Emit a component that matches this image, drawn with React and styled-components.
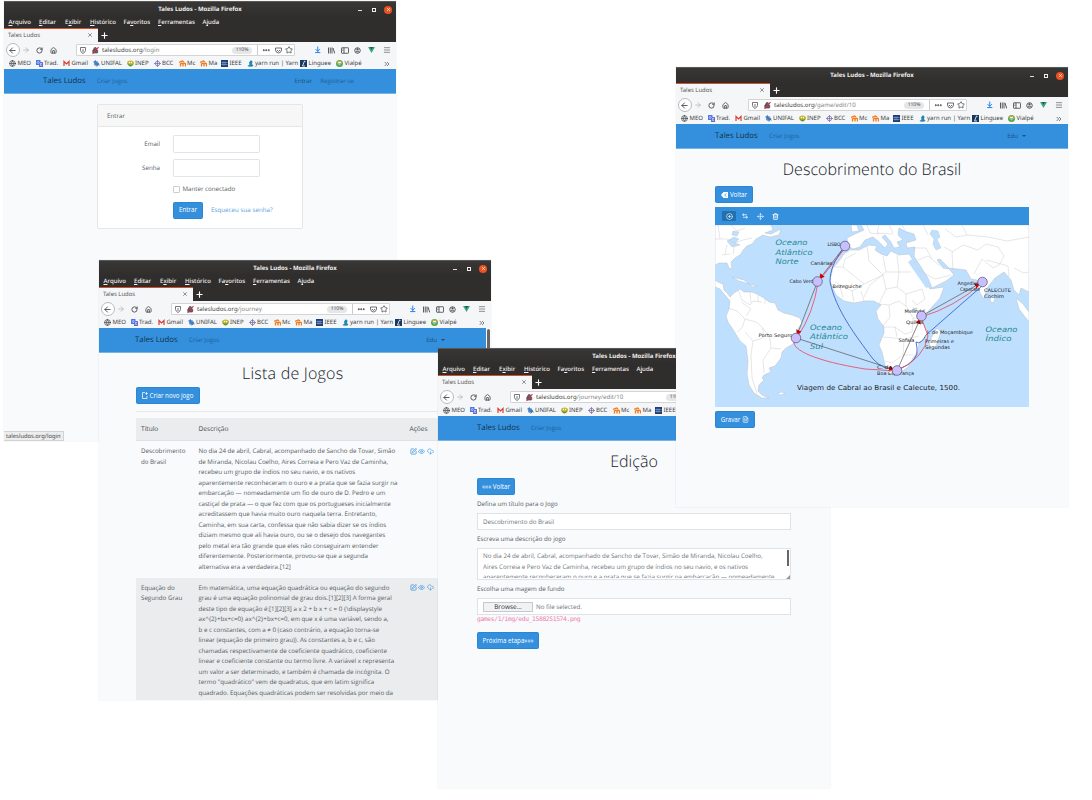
import React from 'react';
import styled, { createGlobalStyle } from 'styled-components';
import {
  ArrowLeft, ArrowRight, RotateCw, House, Ellipsis, Star, ArrowDownToLine, Menu, X, Plus,
  Globe, ChevronsRight, SquarePen, Eye, CloudDownload, Trash2,
  CirclePlus, Move, Lock, FileText,
} from 'lucide-react';

const Global = createGlobalStyle`
  *, *::before, *::after { box-sizing: border-box; }
  body { margin: 0; background: #fff; text-rendering: geometricPrecision; }
`;
const UI = '"Noto Sans", "Open Sans", sans-serif';
const PAGE = '"Open Sans", Lato, sans-serif';

const Desktop = styled.main`
  position: relative; width: 1092px; height: 800px; overflow: hidden; background: #fff;
  font: 6.2px/10.5px ${PAGE}; color: #555c62;
`;
const Win = styled.section`
  position: absolute; left: ${p => p.$x}px; top: ${p => p.$y}px; width: 392px; height: 440px;
  display: flex; flex-direction: column; overflow: hidden; background: #f8fafc;
  box-shadow: 0 0 1px rgba(90, 100, 110, .25);
`;
const Chrome = styled.header`font-family: ${UI}; flex: none;`;
const TitleBar = styled.div`
  height: 16px; display: grid; grid-template-columns: 1fr auto 1fr; align-items: center;
  background: linear-gradient(#393636, #302d2d); color: #f0efed; font-size: 6px; font-weight: 700;
  border-top: 1px solid #5b5858; letter-spacing: .02px;
`;
const Controls = styled.div`display: flex; justify-content: flex-end; align-items: center; gap: 10px; padding-right: 4px;`;
const Minimise = styled.i`width: 4px; height: 1px; background: #ddd; margin-top: 1px;`;
const Maximise = styled.i`width: 4px; height: 4px; border: 1px solid #eee;`;
const Close = styled.i`
  width: 8px; height: 8px; border-radius: 50%; background: #e95420; color: #fff;
  display: flex; align-items: center; justify-content: center; margin-left: -2px;
`;
const MenuBar = styled.div`
  height: 11px; display: grid; grid-template-columns: 30.5px 26px 25px 33.5px 34.5px 44.5px 40px;
  padding-left: 4.5px; background: #302d2d; color: #f4f2f0; font-size: 6.05px; font-weight: 500; line-height: 11px; white-space: nowrap;
  u { text-underline-offset: 1px; text-decoration-thickness: .6px; }
`;
const Tabs = styled.div`height: 14px; display: flex; align-items: center; background: #302d2d; color: #fff;`;
const Tab = styled.div`
  width: 94px; height: 14px; display: flex; align-items: center; justify-content: space-between;
  padding: 0 5px 1px 4px; background: #f5f6f7; border-top: 1px solid #d5502a; color: #555; font-size: 5.9px;
  margin-right: 2px;
`;
const ToolBar = styled.div`height: 16px; display: flex; align-items: center; background: #f5f6f7; color: #4a4a4f;`;
const NavButtons = styled.div`
  width: 72px; display: grid; grid-template-columns: 15px 12px 15px 12px; align-items: center; justify-items: center; padding-left: 1px;
`;
const Back = styled.span`
  width: 14px; height: 14px; border: 1px solid #bbb; border-radius: 50%; background: #fff; display: flex; align-items: center; justify-content: center;
`;
const Address = styled.div`
  width: 219px; height: 12px; display: grid; grid-template-columns: 12px 13px 1fr 24px 6px 12px 12px 9px;
  align-items: center; justify-items: center; border: 1px solid #d4d4d6; border-radius: 1px; background: #fff;
  font-size: 6.1px; padding-right: 1px;
`;
const Url = styled.span`justify-self: start; color: #444; white-space: nowrap; span { color: #888; }`;
const ZoomPill = styled.span`width: 20px; height: 7px; border-radius: 4px; background: #e6e6e8; font-size: 5px; line-height: 7px; text-align: center;`;
const Divider = styled.i`width: 1px; height: 10px; background: #ccc;`;
const Extensions = styled.div`display: grid; grid-template-columns: 14px 13px 13px 13px 14px 18px; flex: 1; padding-left: 16px; align-items: center; justify-items: center;`;
const LockWrap = styled.span`
  display: flex; height: 7px; width: 7px; position: relative; align-items: center; justify-content: center;
  &::after { content: ''; position: absolute; width: 9px; height: 1px; background: #e22850; transform: rotate(-48deg); }
`;
const Bookmarks = styled.div`height: 11px; display: flex; align-items: center; padding: 0 0 0 5px; background: #f5f6f7; color: #3c3c40; font-size: 6px; line-height: 9px;`;
const Bookmark = styled.span`width: ${p => p.$w}px; display: flex; align-items: center; gap: 1.5px; white-space: nowrap; flex: none; svg { flex: none; }`;
const Nav = styled.nav`
  height: 25px; flex: none; display: flex; align-items: center; background: #3490dc; padding: 0 ${p => p.$right}px 0 ${p => p.$left}px;
  color: #1d5f99; font-size: 6.1px; border-bottom: 1px solid #78b3e6; width: ${p => p.$w || 392}px;
`;
const Brand = styled.b`font-weight: 400; font-size: 7.8px; color: #12304b; width: 54px; white-space: nowrap;`;
const NavEnd = styled.span`margin-left: auto; display: flex; gap: 8px; align-items: center;`;
const Dark = styled.span`color: #15507f;`;
const Caret = styled.i`border: 2px solid transparent; border-top-color: #15507f; border-bottom: 0; margin-left: -4px;`;
const Body = styled.div`flex: 1; min-height: 0; padding: 0 39px; display: flex; flex-direction: column; align-items: flex-start; ${p => p.$pl && `padding-left: ${p.$pl}px; padding-right: 41px;`}`;
const Heading = styled.h1`
  align-self: stretch; flex: none; margin: 0; text-align: center; height: ${p => p.$h || 37}px; padding-top: 9px;
  font: 300 16px/22px ${PAGE}; color: #14181c; white-space: nowrap; letter-spacing: ${p => p.$ls || 0.04}px;
`;
const Button = styled.button`
  height: 17px; width: ${p => p.$w}px; padding: 0; border: 1px solid #2a86d3; border-radius: 1.5px; background: #3490dc; color: #fff;
  font: 6.2px/10px ${PAGE}; display: flex; align-items: center; justify-content: center; gap: 2px; white-space: nowrap; flex: none;
`;

const Card = styled.div`
  width: 206px; height: 125px; margin: 10px 0 0 54px; border: 1px solid #e4e6e8; border-radius: 2px; background: #fff;
`;
const CardHead = styled.div`height: 22px; padding: 0 9px; line-height: 21px; background: #f7f7f7; border-bottom: 1px solid #e4e6e8;`;
const Field = styled.label`display: grid; grid-template-columns: 62px 87px; column-gap: 13px; align-items: center; text-align: right; margin-top: ${p => p.$mt}px;`;
const Input = styled.span`height: 18px; border: 1px solid #e1e4e8; border-radius: 1.5px; background: #fff;`;
const Indent = styled.div`margin: ${p => p.$mt}px 0 0 75px; display: flex; align-items: center; gap: ${p => p.$gap}px; white-space: nowrap;`;
const Check = styled.i`width: 7px; height: 7px; border: 1px solid #ccc; border-radius: 1px; background: #fff;`;
const Link = styled.a`color: #5ba2de; letter-spacing: .03px;`;
const Status = styled.div`
  position: absolute; left: 0; bottom: 0; width: 60px; height: 10px; padding-left: 2px; background: #ecedee; border: 1px solid #d2d2d2; border-left: 0;
  font: 5.8px/8px ${UI}; color: #444; white-space: nowrap;
`;

const Rule = styled.hr`width: 303px; height: 1px; border: 0; margin: 7px 0 6px; background: #e5e8ea; flex: none;`;
const Row = styled.div`
  display: grid; grid-template-columns: 57.5px 211px 30px; width: 345px; flex: none; padding: 5px 0 5.5px 5.5px; white-space: nowrap;
  background: ${p => (p.$shade ? '#eaecee' : 'transparent')};
`;
const HeadRow = styled(Row)`height: 23px; padding-top: 6px; background: #eaecee; border-bottom: 1px solid #dee2e6; color: #454b50; font-size: 6.6px;`;
const Actions = styled.span`display: flex; gap: 1.5px; color: #3490dc; height: 10px; align-items: center;`;
const Line = styled.span`display: block; height: 10.5px;`;
const ScrollThumb = styled.i`position: absolute; right: 1px; top: 69px; width: 3px; height: 80px; border-radius: 2px; background: #666;`;

const Label = styled.label`height: 18px; line-height: 17px; flex: none;`;
const Control = styled.div`width: 314px; height: ${p => p.$h || 17}px; border: 1px solid #dfe3e6; background: #fff; padding: 0 5px; color: #6c757d; line-height: 15px; flex: none; display: flex; align-items: center; gap: 3px;`;
const TextArea = styled(Control)`
  display: block; position: relative; padding-top: 2px; line-height: 10.5px; white-space: nowrap;
  &::before { content: ''; position: absolute; right: 1px; top: 1px; width: 2px; height: 16px; background: #666; }
  &::after { content: ''; position: absolute; right: 0; bottom: 0; border: 2px solid transparent; border-right-color: #999; border-bottom-color: #999; }
`;
const Clip = styled.div`height: 27px; overflow: hidden;`;
const Browse = styled.span`width: 50px; height: 10px; border: 1px solid #c5c9cc; background: #f1f2f3; color: #333; text-align: center; line-height: 8px; font-size: 6.5px;`;
const Path = styled.code`font: 6.3px/10px "DejaVu Sans Mono", monospace; color: #f080ab; letter-spacing: -.35px; margin-bottom: 7px; white-space: nowrap;`;

const EditorBar = styled.div`
  width: 314px; height: 18px; margin-top: 4px; background: #3490dc; display: flex; align-items: center; padding-left: 7px; color: #fff; flex: none;
`;
const Tool = styled.span`width: 14px; height: 10px; margin-right: 1.5px; border-radius: 1px; display: flex; align-items: center; justify-content: center; background: ${p => (p.$on ? '#2270b0' : 'transparent')};`;
const MapSvg = styled.svg`display: block; flex: none; margin-bottom: 4px;`;

const menus = [['', 'A', 'rquivo'], ['', 'E', 'ditar'], ['E', 'x', 'ibir'], ['', 'H', 'istórico'], ['Fa', 'v', 'oritos'], ['', 'F', 'erramentas'], ['A', 'j', 'uda']];

const Mini = ({ children }) => <svg width="7" height="7" viewBox="0 0 14 14">{children}</svg>;
const Moodle = () => <Mini><path d="M0 5 7 2 10 4M3 13V7M3 8q3-3 5 0v5M8 8q3-3 5 0v5" fill="none" stroke="#f07a1c" strokeWidth="2.6" /></Mini>;
const marks = [
  ['MEO', 26.5, <Globe size={7} strokeWidth={2.2} />],
  ['Trad.', 27.5, <Mini><rect width="9" height="10" rx="1" fill="#4b74e8" /><rect x="6" y="4" width="8" height="10" rx="1" fill="#5b6bd1" /><circle cx="4.5" cy="5" r="2" fill="none" stroke="#fff" /><path d="M8 7h4M10 7q0 3-2 5M9 9l3 3" stroke="#fff" fill="none" /></Mini>],
  ['Gmail', 29.5, <Mini><path d="M2 12V3l5 5 5-5v9" fill="none" stroke="#dd3b32" strokeWidth="2.4" /></Mini>],
  ['UNIFAL', 34, <Mini><path d="M1 4l4-3 3 4 4 3-3 4-4-3-3-1 3-2zM8 2l5 9M2 9l6 4" fill="#3f7ec9" stroke="#2564b4" /></Mini>],
  ['INEP', 27, <Mini><ellipse cx="7" cy="6" rx="7" ry="5" fill="#c8b52f" /><path d="M1 7q6 5 12 0-2 6-6 6T1 7" fill="#4a9a48" /><circle cx="5" cy="5" r="1.4" fill="#fff" /><circle cx="9" cy="5" r="1.4" fill="#fff" /></Mini>],
  ['BCC', 25, <Mini><path d="M7 0v14M0 7h14" stroke="#7e6aa8" strokeWidth="1.5" /><circle cx="7" cy="7" r="4.5" fill="none" stroke="#7e6aa8" strokeWidth="1.5" /></Mini>],
  ['Mc', 21.5, <Moodle />],
  ['Ma', 21, <Moodle />],
  ['IEEE', 25.5, <Mini><rect width="14" height="14" fill="#1d3d79" /><path d="M1 5h12M1 9h12M4 3v8M8 3v8" stroke="#a9bde2" /></Mini>],
  ['yarn run | Yarn', 53.5, <Mini><path d="M7 1q4-1 4 3l-1 4 3 4q-4 2-10 1l-2-1 4-3-1-4z" fill="#2188b6" /></Mini>],
  ['Linguee', 36, <Mini><rect width="14" height="14" fill="#173a63" /><path d="M9 2 5 12h5M9 2l2 1" stroke="#fff" strokeWidth="1.6" fill="none" /></Mini>],
  ['Vialpé', 47, <Mini><circle cx="7" cy="7" r="7" fill="#58a744" /><circle cx="7" cy="7" r="3.5" fill="#fff" /><path d="M1 5q6-6 12 0" stroke="#e6b52a" strokeWidth="2" fill="none" /><path d="M4 8h6" stroke="#2f73b8" strokeWidth="2" /></Mini>],
];

function Browser({ x, y, url, menu = true, children }) {
  return (
    <Win $x={x} $y={y}>
      <Chrome>
        <TitleBar>
          <span /><span>Tales Ludos - Mozilla Firefox</span>
          <Controls><Minimise /><Maximise /><Close><X size={5} strokeWidth={3} /></Close></Controls>
        </TitleBar>
        {menu && <MenuBar>{menus.map(([a, u, b]) => <span key={b}>{a}<u>{u}</u>{b}</span>)}</MenuBar>}
        <Tabs><Tab><span>Tales Ludos</span><X size={6} strokeWidth={2.5} /></Tab><Plus size={9} strokeWidth={3} /></Tabs>
        <ToolBar>
          <NavButtons>
            <Back><ArrowLeft size={9} strokeWidth={2.4} /></Back><ArrowRight size={8} color="#aaa" />
            <RotateCw size={7} strokeWidth={3} /><House size={7} strokeWidth={2.8} />
          </NavButtons>
          <Address>
            <svg width="6" height="7" viewBox="0 0 12 14" fill="none" stroke="#4a4a4f" strokeWidth="1.5"><path d="M1 1h10v6q-1 4-5 6Q2 11 1 7zM6 4v6" /></svg><LockWrap><Lock size={6.5} strokeWidth={3} fill="#666" /></LockWrap>
            <Url>talesludos.org<span>/{url}</span></Url><ZoomPill>110%</ZoomPill><Divider /><Ellipsis size={8.5} strokeWidth={3.4} />
            <svg width="7" height="7" viewBox="0 0 14 14" fill="none" stroke="#4a4a4f" strokeWidth="1.6"><path d="M1 2h12v4q-1 6-6 6T1 6zM4 6l3 3 3-3" /></svg>
            <Star size={8} strokeWidth={2.3} />
          </Address>
          <Extensions>
            <ArrowDownToLine size={7.5} color="#1a7cf0" strokeWidth={3} />
            <svg width="7" height="7" viewBox="0 0 14 14" stroke="#4a4a4f" strokeWidth="1.8"><path d="M1 1v12M4.5 1v12M8 1v12M10 2l3.5 11" /></svg>
            <svg width="8" height="7" viewBox="0 0 16 14" fill="none" stroke="#4a4a4f" strokeWidth="1.7"><rect x="1" y="1.5" width="14" height="11" rx="1" /><path d="M6 1.5v11M3 4h1.5M3 7h1.5" /></svg>
            <svg width="7" height="7" viewBox="0 0 14 14" fill="none" stroke="#4a4a4f" strokeWidth="1.9"><circle cx="7" cy="7" r="5.5" /><path d="M4 8q3 3 6 0" /><circle cx="7" cy="4.8" r="1.3" fill="#4a4a4f" /></svg>
            <svg width="7" height="6" viewBox="0 0 14 12"><path d="M0 0h14L7 12z" fill="#35a877" /><path d="M4 0h6L7 5.5z" fill="#34495e" /></svg>
            <Menu size={8} strokeWidth={1.8} />
          </Extensions>
        </ToolBar>
        <Bookmarks>
          {marks.map(([t, w, icon]) => <Bookmark key={t} $w={w}>{icon}{t}</Bookmark>)}
          <ChevronsRight size={8} />
        </Bookmarks>
      </Chrome>
      {children}
    </Win>
  );
}

const Top = ({ left = 39, right = 42, w, user }) => (
  <Nav $left={left} $right={right} $w={w}>
    <Brand>Tales Ludos</Brand><span>Criar Jogos</span>
    <NavEnd>{user ? <><Dark>Edu</Dark><Caret /></> : <><Dark>Entrar</Dark><span>Registrar-se</span></>}</NavEnd>
  </Nav>
);

const rows = [
  { title: ['Descobrimento', 'do Brasil'], text: [
    'No dia 24 de abril, Cabral, acompanhado de Sancho de Tovar, Simão', 'de Miranda, Nicolau Coelho, Aires Correia e Pero Vaz de Caminha,',
    'recebeu um grupo de índios no seu navio, e os nativos', 'aparentemente reconheceram o ouro e a prata que se fazia surgir na',
    'embarcação — nomeadamente um fio de ouro de D. Pedro e um', 'castiçal de prata — o que fez com que os portugueses inicialmente',
    'acreditassem que havia muito ouro naquela terra. Entretanto,', 'Caminha, em sua carta, confessa que não sabia dizer se os índios',
    'diziam mesmo que ali havia ouro, ou se o desejo dos navegantes', 'pelo metal era tão grande que eles não conseguiram entender',
    'diferentemente. Posteriormente, provou-se que a segunda', 'alternativa era a verdadeira.[12]'] },
  { title: ['Equação do', 'Segundo Grau'], text: [
    'Em matemática, uma equação quadrática ou equação do segundo', 'grau é uma equação polinomial de grau dois.[1][2][3] A forma geral',
    'deste tipo de equação é:[1][2][3] a x 2 + b x + c = 0 {\\displaystyle', 'ax^{2}+bx+c=0} ax^{2}+bx+c=0, em que x é uma variável, sendo a,',
    'b e c constantes, com a ≠ 0 (caso contrário, a equação torna-se', 'linear (equação de primeiro grau)). As constantes a, b e c, são',
    'chamadas respectivamente de coeficiente quadrático, coeficiente', 'linear e coeficiente constante ou termo livre. A variável x representa',
    'um valor a ser determinado, e também é chamada de incógnita. O', 'termo "quadrático" vem de quadratus, que em latim significa',
    'quadrado. Equações quadráticas podem ser resolvidas por meio da'] },
];

const lands = [
  'M0 0H56L58 5 50 8 56 9 66 4 64 10 55 12 48 10 41 14 37 19 32 21 28 25 26 29 20 33 16 37 17 44 14 43 12 38 4 38 0 40Z',
  'M0 55 3 57 8 59 9 65 13 69 15 72 19 68 25 64 29 67 37 67 42 69 49 73 54 77 60 78 63 85 69 88 77 90 85 93 87 98 82 105 81 113 78 119 71 123 67 127 66 133 60 141 54 143 56 147 49 150 47 153 49 155 44 160 43 166 47 170 54 173 47 173 39 168 34 160 32 149 33 136 31 121 25 116 19 106 13 97 11 91 14 84 15 76 10 70 5 64 0 62Z',
  'M135 25 144 25 154 20 162 21 160 25 166 29 172 31 176 26 184 30 194 29 198 35 203 45 208 55 215 64 229 62 225 73 217 82 209 91 208 98 213 108 211 112 204 118 203 126 198 133 193 142 185 148 174 149 170 140 167 127 164 120 169 108 169 102 163 94 161 86 166 80 159 76 150 76 139 78 129 76 121 70 117 61 115 55 118 43 124 36 129 29Z',
  'M146 0 149 5 140 9 132 13 133 21 138 24 145 22 150 15 158 12 163 16 170 23 173 19 167 12 170 10 176 17 179 23 185 22 182 17 188 15 183 10 184 3 192 7 199 9 201 15 191 18 192 23 200 22 199 31 206 42 213 53 217 63 231 56 239 50 234 44 228 43 222 35 225 34 234 43 251 45 256 54 262 55 265 68 269 74 272 63 280 53 289 47 296 55 299 65 304 70 306 63 314 67V0Z',
  'M136 0 142 0 144 6 137 7Z', 'M222 103 226 107 221 121 216 125 214 117Z', 'M276 71 280 74 278 78 275 76Z', 'M301 73 308 79 314 87 314 97 304 84Z', 'M17 52 29 55 34 59 24 56ZM34 59 42 61 38 62Z', 'M63 168 67 167 70 169 65 170Z',
];
const borders = 'M0 14 12 14 20 18 28 15 37 13M3 0 5 14M16 0 22 6 30 3M7 30 15 29M12 20 10 29M20 18 18 29M23 65 27 75 35 80 38 76 47 77M35 67 36 78M43 70 43 77M50 74 50 79M13 83 22 86 30 94 27 103 22 107M30 94 41 97 48 103 48 113 38 116 30 107M48 103 55 113 56 123 66 124M38 116 36 130 37 153 42 168M56 123 48 135 49 148M26 77 36 84 31 91M119 42 128 42 130 34 141 28M128 42 149 59 137 66 120 57M152 21 154 36 168 50 149 59M168 31 171 47 196 47M182 30 184 48 182 62 171 64 168 50M171 47 155 60 149 72M137 66 139 77M146 66 149 76M125 61 128 73M182 62 191 69 207 64M171 64 164 79 174 80 184 76 191 81 191 69M174 80 175 92 167 102 180 102 190 109 197 107 198 93 191 81M168 112 189 114 188 130 177 138 170 136M189 114 204 111M188 130 198 130M198 93 209 95M180 102 182 112M207 64 210 74 202 80 197 75M203 35 213 31 225 41M203 45 220 54 236 50M198 23 211 23 217 34M238 45 237 27 248 20 263 25 271 19 283 22 289 31 285 39 278 43 267 34 259 49M238 27 229 22M252 10 273 12 292 16 314 12M271 35 286 39 293 41 294 52M299 43 309 48 314 47M152 0 155 8 164 9M164 0 162 8 178 9M174 0 178 8M187 0 190 5M208 0 213 10M230 4 241 12 252 10M247 0 252 10';

const Txt = ({ x, y, w, children, big, sea }) => (
  <text x={x} y={y} textLength={w} lengthAdjust="spacingAndGlyphs" fontFamily="DejaVu Sans, sans-serif" fontSize={big ? 6.8 : sea ? 7.5 : 4.9}
    fontStyle={sea ? 'italic' : undefined} fill={sea ? '#268b91' : '#222'}>{children}</text>
);

function VoyageMap() {
  const nodes = [[130, 21], [102.5, 56.5], [81, 113], [182, 145.5], [206.5, 91], [267.5, 57]];
  return (
    <MapSvg width="314" height="182" viewBox="0 0 314 182">
      <defs><marker id="tip" viewBox="0 0 6 6" refX="9" refY="3" markerWidth="5.5" markerHeight="5.5" markerUnits="userSpaceOnUse" orient="auto"><path d="M0 0 6 3 0 6Z" fill="#d40000" /></marker></defs>
      <rect width="314" height="182" fill="#bfdfff" />
      <g fill="#fff" stroke="#b9bfc4" strokeWidth=".5">{lands.map(d => <path key={d} d={d} />)}</g>
      <g fill="#bfdfff" stroke="#b9bfc4" strokeWidth=".4">
        <path d="M217 5 223 6 225 12 222 14 226 23 221 25 218 19 219 14 215 9Z" /><path d="M12 16 19 12 24 14 20 18 25 20 17 22ZM18 6 24 7 22 11 17 10Z" />
        <path d="M193 37 197 34 214 62 211 63Z" stroke="none" /><path d="M207 86 210 84 210 90Z" /><path d="M198 83 202 83 201 87 198 87Z" />
      </g>
      <path d={borders} fill="none" stroke="#c9cdd0" strokeWidth=".5" />
      <Txt sea x="60.5" y="20" w="32">Oceano</Txt><Txt sea x="60.5" y="29.5" w="37">Atlântico</Txt><Txt sea x="60.5" y="39" w="23">Norte</Txt>
      <Txt sea x="95" y="105" w="32">Oceano</Txt><Txt sea x="95" y="114" w="38">Atlântico</Txt><Txt sea x="95" y="123.5" w="13">Sul</Txt>
      <Txt sea x="270.5" y="106.5" w="32">Oceano</Txt><Txt sea x="270.5" y="116" w="26">Índico</Txt>
      <g fill="none" stroke="#2857c5" strokeWidth=".8">
        <path d="M130 21C119 36 115 45 115 57 121 85 140 110 158 134Q168 145 182 145Q205 136 202 123L201 117Q206 120 211 110L267 61" />
      </g>
      <g fill="none" stroke="#ef4056" strokeWidth=".8">
        <path d="M131 22 103 57Q99 87 82 113M79 116C77 125 100 136 150 144L182 146Q210 132 213 111L206 92Q240 82 267 58" />
      </g>
      <g stroke="#555" strokeWidth=".7">{nodes.slice(1).map((n, i) => <line key={i} x1={nodes[i][0]} y1={nodes[i][1]} x2={n[0]} y2={n[1]} markerEnd="url(#tip)" />)}</g>
      <Txt x="112.5" y="20.5" w="16">LISBOA</Txt><Txt x="95.5" y="40" w="22">Canárias</Txt><Txt x="74.5" y="58" w="27">Cabo Verde</Txt>
      <Txt x="117.5" y="62.5" w="29">Bezeguiche</Txt><Txt x="43.5" y="112" w="34">Porto Seguro</Txt>
      <Txt x="162" y="143.5" w="15">C. da</Txt><Txt x="162" y="149.5" w="37">Boa Esperança</Txt><Txt x="189.5" y="88" w="20">Melinde</Txt>
      <Txt x="191" y="99" w="17">Quiloa</Txt><Txt x="183.5" y="116.5" w="16">Sofala</Txt><Txt x="212" y="109" w="46">I. de Moçambique</Txt>
      <Txt x="210" y="118" w="29">Primeiras e</Txt><Txt x="210" y="123.5" w="25">Segundas</Txt><Txt x="242.5" y="59.5" w="22">Angediva</Txt>
      <Txt x="245" y="66" w="20">Capocate</Txt><Txt x="269" y="67" w="27">CALECUTE</Txt><Txt x="269" y="72.5" w="20">Cochim</Txt>
      <Txt big x="82" y="165" w="163">Viagem de Cabral ao Brasil e Calecute, 1500.</Txt>
      <g fill="#c8bfff" stroke="#55516e" strokeWidth=".7">{nodes.map(n => <circle key={n[0]} cx={n[0]} cy={n[1]} r="4.8" />)}</g>
    </MapSvg>
  );
}

export default function App() {
  return (
    <Desktop>
      <Global />
      <Browser x={4} y={1} url="login">
        <Top />
        <Body>
          <Card>
            <CardHead>Entrar</CardHead>
            <Field $mt={8}>Email<Input /></Field>
            <Field $mt={6}>Senha<Input /></Field>
            <Indent $mt={7} $gap={2.5}><Check />Manter conectado</Indent>
            <Indent $mt={7} $gap={8}><Button $w={30}>Entrar</Button><Link>Esqueceu sua senha?</Link></Indent>
          </Card>
        </Body>
        <Status>talesludos.org/login</Status>
      </Browser>

      <Browser x={99} y={260} url="journey">
        <Top left={36} right={41} w={387} user />
        <Body $pl={36.5}>
          <Heading $h={34} $ls={0.22}>Lista de Jogos</Heading>
          <Button $w={64}>
            <svg width="6" height="7" viewBox="0 0 12 14" fill="none" stroke="#fff" strokeWidth="1.5"><path d="M6 1H1v12h9V8M9 0v6M6.5 3h5" /></svg>
            Criar novo jogo
          </Button>
          <Rule />
          <HeadRow><span>Título</span><span>Descrição</span><span>Ações</span></HeadRow>
          {rows.map((r, i) => (
            <Row key={r.title[0]} $shade={i === 1}>
              <div>{r.title.map(t => <Line key={t}>{t}</Line>)}</div>
              <div>{r.text.map(t => <Line key={t}>{t}</Line>)}</div>
              <Actions><SquarePen size={7} strokeWidth={2.4} /><Eye size={7} /><CloudDownload size={7} /></Actions>
            </Row>
          ))}
        </Body>
        <ScrollThumb />
      </Browser>

      <Browser x={438} y={348} url="journey/edit/10">
        <Top user />
        <Body>
          <Heading>Edição</Heading>
          <Button $w={38}>««« Voltar</Button>
          <Label>Defina um título para o Jogo</Label>
          <Control>Descobrimento do Brasil</Control>
          <Label>Escreva uma descrição do jogo</Label>
          <TextArea $h={32}><Clip>
            <Line>No dia 24 de abril, Cabral, acompanhado de Sancho de Tovar, Simão de Miranda, Nicolau Coelho,</Line>
            <Line>Aires Correia e Pero Vaz de Caminha, recebeu um grupo de índios no seu navio, e os nativos</Line>
            <Line>aparentemente reconheceram o ouro e a prata que se fazia surgir na embarcação — nomeadamente</Line>
          </Clip></TextArea>
          <Label>Escolha uma magem de fundo</Label>
          <Control><Browse>Browse...</Browse>No file selected.</Control>
          <Path>games/1/img/edu_1588251574.png</Path>
          <Button $w={62}>Próxima etapa»»»</Button>
        </Body>
      </Browser>

      <Browser x={676} y={67} url="game/edit/10" menu={false}>
        <Top user />
        <Body>
          <Heading>Descobrimento do Brasil</Heading>
          <Button $w={38}>
            <svg width="7" height="6" viewBox="0 0 14 12"><path d="M0 6 5 0h9v12H5z" fill="#fff" /><path d="M11 3 7 6l4 3" fill="none" stroke="#3490dc" strokeWidth="1.5" /></svg>
            Voltar
          </Button>
          <EditorBar>
            <Tool $on><CirclePlus size={7} /></Tool>
            <Tool><svg width="6" height="6" viewBox="0 0 12 12" fill="none" stroke="#fff" strokeWidth="1.4"><path d="M4 1 1 3.5 4 6M1 3.5h9M8 6l3 2.5L8 11M11 8.500H2" /></svg></Tool>
            <Tool><Move size={7} /></Tool><Tool><Trash2 size={7} strokeWidth={2.6} /></Tool>
          </EditorBar>
          <VoyageMap />
          <Button $w={40}>Gravar<FileText size={7} /></Button>
        </Body>
      </Browser>
    </Desktop>
  );
}
